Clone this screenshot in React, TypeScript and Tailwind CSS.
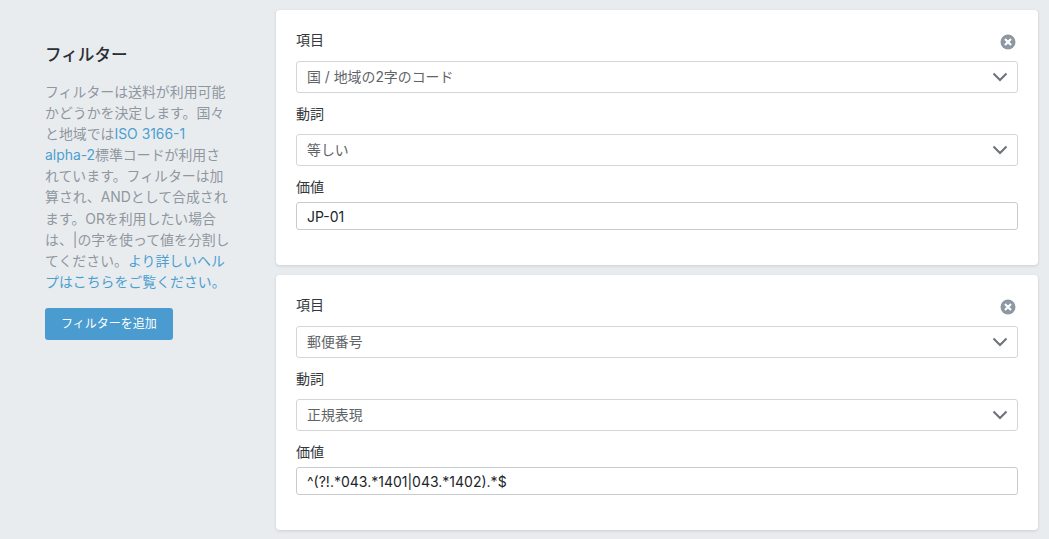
const filters = [
  { field: "国 / 地域の2字のコード", verb: "等しい", value: "JP-01" },
  { field: "郵便番号", verb: "正規表現", value: "^(?!.*043.*1401|043.*1402).*$" },
];

function SelectBox({ text }: { text: string }) {
  return (
    <div className="flex h-[32px] items-center justify-between rounded-[3px] border border-[#d3d6d8] bg-white pl-[10px] pr-[9px] text-[13.9px] text-[#5f6468]">
      <span>{text}</span>
      <svg width="16" height="10" viewBox="0 0 16 10" fill="none" stroke="#6d7278" strokeWidth="2">
        <path d="M1.5 1.5 8 8l6.5-6.5" />
      </svg>
    </div>
  );
}

function FilterCard({ field, verb, value }: { field: string; verb: string; value: string }) {
  return (
    <div className="h-[255px] rounded-[4px] bg-white px-[20px] pt-[20px] shadow-[0_1px_3px_rgba(60,70,80,0.18)]">
      <div className="flex h-[20px] items-center justify-between">
        <label className="text-[14px] leading-[20px] text-[#33383c]">項目</label>
        <svg width="16" height="16" viewBox="0 0 16 16" className="mr-[2px] mt-[4px]">
          <circle cx="8" cy="8" r="7.5" fill="#8d98a3" />
          <path d="M5 5l6 6M11 5l-6 6" stroke="#fff" strokeWidth="2.2" />
        </svg>
      </div>
      <div className="mt-[11px]">
        <SelectBox text={field} />
      </div>
      <label className="mt-[11px] block text-[14px] leading-[20px] text-[#33383c]">動詞</label>
      <div className="mt-[10px]">
        <SelectBox text={verb} />
      </div>
      <label className="mt-[11px] block text-[14px] leading-[20px] text-[#33383c]">価値</label>
      <input
        defaultValue={value}
        className="mt-[5px] block h-[28px] w-full rounded-[3px] border border-[#c8cbce] bg-white px-[10px] text-[14px] text-[#212529] outline-none"
      />
    </div>
  );
}

export default function App() {
  return (
    <div
      className="flex h-[539px] w-[1049px] overflow-hidden bg-[#e9ecef] pt-[10px]"
      style={{ fontFamily: 'Inter, "Noto Sans CJK JP", sans-serif' }}
    >
      <aside className="ml-[45px] w-[186px] shrink-0 pt-[33px]">
        <h2 className="text-[16.6px] font-medium leading-[24px] text-[#2b2f33]">フィルター</h2>
        <p className="mt-[15px] text-[13.9px] leading-[21.1px] text-[#8f979f]">
          フィルターは送料が利用可能
          <br />
          かどうかを決定します。国々
          <br />
          と地域では<span className="text-[#4b9fcf]">ISO 3166-1</span>
          <br />
          <span className="text-[#4b9fcf]">alpha-2</span>標準コードが利用さ
          <br />
          れています。フィルターは加
          <br />
          算され、ANDとして合成され
          <br />
          ます。ORを利用したい場合
          <br />
          は、|の字を使って値を分割し
          <br />
          てください。<span className="text-[#4b9fcf]">より詳しいヘル</span>
          <br />
          <span className="text-[#4b9fcf]">プはこちらをご覧ください。</span>
        </p>
        <button className="mt-[15px] h-[32px] w-[128px] rounded-[3px] bg-[#4a9bcf] text-[12px] text-white">
          フィルターを追加
        </button>
      </aside>
      <main className="ml-[45px] flex w-[762px] shrink-0 flex-col gap-[10px]">
        {filters.map((f) => (
          <FilterCard key={f.field} field={f.field} verb={f.verb} value={f.value} />
        ))}
      </main>
    </div>
  );
}
